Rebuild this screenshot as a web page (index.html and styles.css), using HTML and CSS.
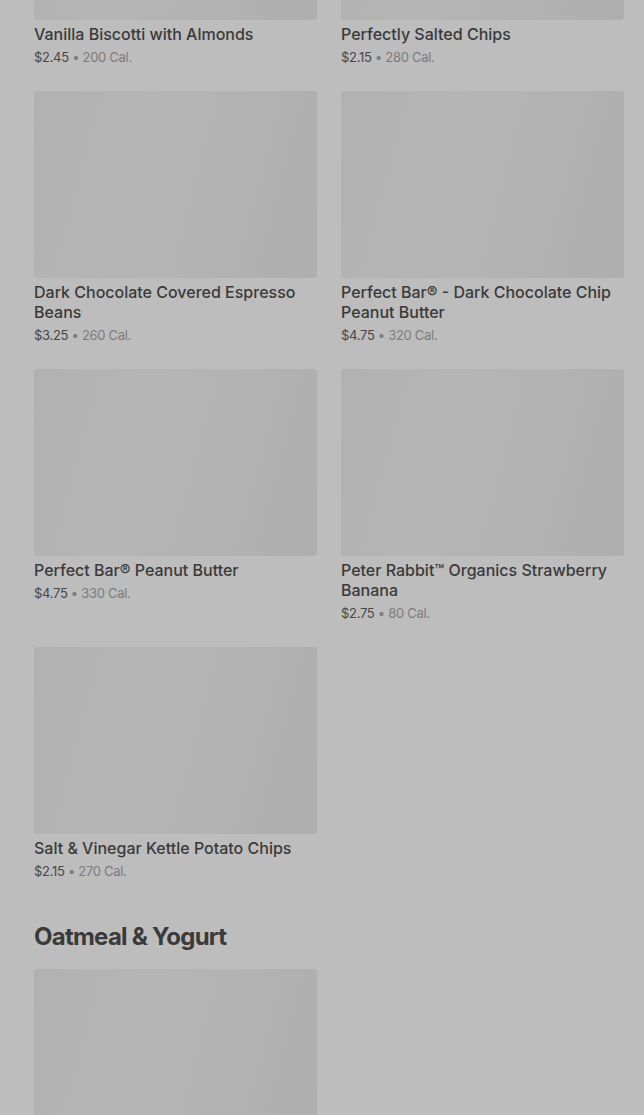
FILE: index.html
```html
<!DOCTYPE html>
<html lang="en">
<head>
<meta charset="utf-8">
<title>Menu</title>
<link rel="stylesheet" href="styles.css">
</head>
<body>
<main class="menu">
  <section class="section section-first">
    <div class="grid">
      <article class="item">
        <div class="thumb"></div>
        <h3 class="name">Vanilla Biscotti with Almonds</h3>
        <p class="meta"><span class="price">$2.45</span> • 200 Cal.</p>
      </article>
      <article class="item">
        <div class="thumb"></div>
        <h3 class="name">Perfectly Salted Chips</h3>
        <p class="meta"><span class="price">$2.15</span> • 280 Cal.</p>
      </article>
      <article class="item">
        <div class="thumb"></div>
        <h3 class="name">Dark Chocolate Covered Espresso Beans</h3>
        <p class="meta"><span class="price">$3.25</span> • 260 Cal.</p>
      </article>
      <article class="item">
        <div class="thumb"></div>
        <h3 class="name">Perfect Bar® - Dark Chocolate Chip Peanut Butter</h3>
        <p class="meta"><span class="price">$4.75</span> • 320 Cal.</p>
      </article>
      <article class="item">
        <div class="thumb"></div>
        <h3 class="name">Perfect Bar® Peanut Butter</h3>
        <p class="meta"><span class="price">$4.75</span> • 330 Cal.</p>
      </article>
      <article class="item">
        <div class="thumb"></div>
        <h3 class="name">Peter Rabbit™ Organics Strawberry Banana</h3>
        <p class="meta"><span class="price">$2.75</span> • 80 Cal.</p>
      </article>
      <article class="item">
        <div class="thumb"></div>
        <h3 class="name">Salt &amp; Vinegar Kettle Potato Chips</h3>
        <p class="meta"><span class="price">$2.15</span> • 270 Cal.</p>
      </article>
    </div>
  </section>
  <section class="section">
    <h2 class="section-title">Oatmeal &amp; Yogurt</h2>
    <div class="grid">
      <article class="item">
        <div class="thumb"></div>
      </article>
    </div>
  </section>
</main>
</body>
</html>
```
FILE: styles.css
```css
html, body {
  margin: 0;
  padding: 0;
  background: #bdbdbd;
  height: 1115px;
  overflow: hidden;
}
body {
  font-family: Inter, Roboto, "Liberation Sans", sans-serif;
  color: #3b3b3b;
}
.menu {
  padding: 0 20px 0 34px;
}
.section-first {
  margin-top: -167px;
}
.grid {
  display: grid;
  grid-template-columns: 283px 283px;
  column-gap: 24px;
  row-gap: 25px;
  align-items: start;
}
.thumb {
  height: 187px;
  border-radius: 3px;
  background: linear-gradient(105deg, #b1b1b1 0%, #b5b5b5 35%, #b3b3b3 60%, #aeaeae 100%);
}
.name {
  margin: 4px 0 0;
  font-size: 16px;
  line-height: 20px;
  font-weight: 500;
  color: #3a3a3a;
  letter-spacing: 0;
}
.meta {
  margin: 4px 0 0;
  font-size: 13px;
  line-height: 18px;
  color: #7c7c7c;
  letter-spacing: -0.3px;
}
.price {
  color: #474747;
}
.section-title {
  margin: 41px 0 16px;
  font-size: 24px;
  line-height: 32px;
  font-weight: 700;
  color: #3a3a3a;
  letter-spacing: -0.75px;
}
```
